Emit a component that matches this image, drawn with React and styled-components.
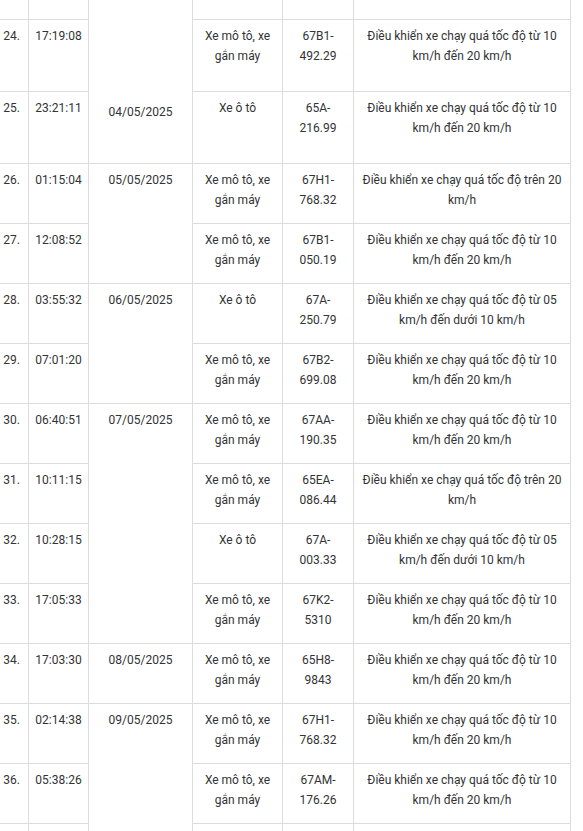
import React from 'react'
import styled, { createGlobalStyle } from "styled-components";

const GlobalStyle = createGlobalStyle`
  html, body {
    margin: 0;
    padding: 0;
    background: #ffffff;
    overflow: hidden;
  }
  body {
    font-family: Roboto, "Liberation Sans", Arial, sans-serif;
  }
`;

const MOTO = 'Xe mô tô, xe gắn máy'
const CAR = 'Xe ô tô'
const V10 = 'Điều khiển xe chạy quá tốc độ từ 10 km/h đến 20 km/h'
const V20 = 'Điều khiển xe chạy quá tốc độ trên 20 km/h'
const V05 = 'Điều khiển xe chạy quá tốc độ từ 05 km/h đến dưới 10 km/h'

const widths = [34, 60, 104, 90, 71, 217]

// date: [text, rowspan, align] only on the first row of each day group
// the first and last rows are only partly in view, so they stay empty
const rows = [
    { id: 'top', no: '', time: '', date: ['04/05/2025', 3, 'bottom'], kind: '', plate: null, text: '', h: 60 },
    { id: 24, no: '24.', time: '17:19:08', kind: MOTO, plate: ['67B1', '492.29'], text: V10, h: 72 },
    { id: 25, no: '25.', time: '23:21:11', kind: CAR, plate: ['65A', '216.99'], text: V10, h: 72 },
    { id: 26, no: '26.', time: '01:15:04', date: ['05/05/2025', 2], kind: MOTO, plate: ['67H1', '768.32'], text: V20, h: 60 },
    { id: 27, no: '27.', time: '12:08:52', kind: MOTO, plate: ['67B1', '050.19'], text: V10, h: 60 },
    { id: 28, no: '28.', time: '03:55:32', date: ['06/05/2025', 2], kind: CAR, plate: ['67A', '250.79'], text: V05, h: 60 },
    { id: 29, no: '29.', time: '07:01:20', kind: MOTO, plate: ['67B2', '699.08'], text: V10, h: 60 },
    { id: 30, no: '30.', time: '06:40:51', date: ['07/05/2025', 4], kind: MOTO, plate: ['67AA', '190.35'], text: V10, h: 60 },
    { id: 31, no: '31.', time: '10:11:15', kind: MOTO, plate: ['65EA', '086.44'], text: V20, h: 60 },
    { id: 32, no: '32.', time: '10:28:15', kind: CAR, plate: ['67A', '003.33'], text: V05, h: 60 },
    { id: 33, no: '33.', time: '17:05:33', kind: MOTO, plate: ['67K2', '5310'], text: V10, h: 60 },
    { id: 34, no: '34.', time: '17:03:30', date: ['08/05/2025', 1], kind: MOTO, plate: ['65H8', '9843'], text: V10, h: 60 },
    { id: 35, no: '35.', time: '02:14:38', date: ['09/05/2025', 3], kind: MOTO, plate: ['67H1', '768.32'], text: V10, h: 60 },
    { id: 36, no: '36.', time: '05:38:26', kind: MOTO, plate: ['67AM', '176.26'], text: V10, h: 60 },
    { id: 'bottom', no: '', time: '', kind: '', plate: null, text: '', h: 60 },
]

function App() {
return (
    <>
    <GlobalStyle />
    <Table>
        <colgroup>
            {widths.map((w, i) => <Col key={i} $w={w} />)}
        </colgroup>
        <tbody>
            {rows.map((r) => (
                <Row key={r.id} $h={r.h}>
                    <Cell>{r.no}</Cell>
                    <Cell>{r.time}</Cell>
                    {r.date && (
                        <Cell rowSpan={r.date[1]} $valign={r.date[2]}>{r.date[0]}</Cell>
                    )}
                    <Cell>{r.kind}</Cell>
                    <Cell>{r.plate && <>{r.plate[0]}-<br />{r.plate[1]}</>}</Cell>
                    <Cell>{r.text}</Cell>
                </Row>
            ))}
        </tbody>
    </Table>
    </>
)
}

const Table = styled.table`
    border-collapse: collapse;
    table-layout: fixed;
    width: 576px;
    margin-top: -41px;
    margin-left: -6px;
    color: #333333;
    font-size: 12px;
    line-height: 20px;
`;

const Col = styled.col`
    width: ${(p) => p.$w}px;
`;

const Row = styled.tr`
    height: ${(p) => p.$h}px;
`;

const Cell = styled.td`
    border: 1px solid #dcdcdc;
    padding: ${(p) => (p.$valign === 'bottom' ? '6px 6px 41px' : '6px')};
    text-align: center;
    vertical-align: ${(p) => p.$valign || 'top'};
    word-wrap: break-word;
`;

export default App;
